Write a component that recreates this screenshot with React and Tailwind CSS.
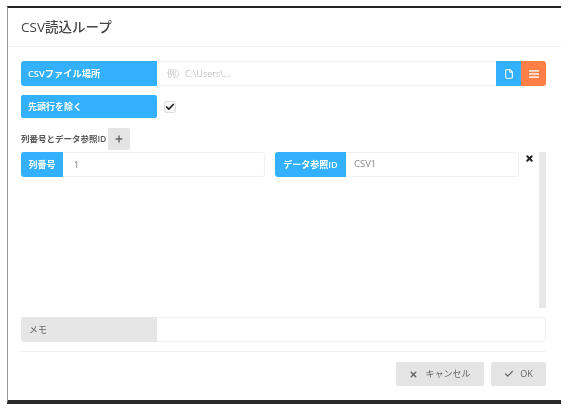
import React from "react";
import { X, Check, File, Plus } from "lucide-react";

function Menu() {
  return (
    <svg width="10" height="8" viewBox="0 0 10 8" fill="#ffe0d2">
      <rect x="0" y="0" width="10" height="1.8" />
      <rect x="0" y="3.1" width="10" height="1.8" />
      <rect x="0" y="6.2" width="10" height="1.8" />
    </svg>
  );
}

export default function App() {
  return (
    <div className="w-[576px] h-[420px] bg-white overflow-hidden pt-[6px] pl-[7px] font-['Open_Sans','Noto_Sans_CJK_JP',sans-serif] blur-[0.7px]">
      <div className="w-[554px] h-[398px] flex flex-col border-l border-l-[#999999] border-t-[2px] border-t-[#222222] border-b-[4px] border-b-[#2a2a2a] bg-white">
        <div className="h-[39px] shrink-0 flex items-center pl-[13px] border-b border-[#f0f0f0] text-[13.5px] font-medium text-[#444444]">
          CSV読込ループ
        </div>
        <div className="flex flex-col pl-[13px] pr-[15px] pt-[14px]">
          <div className="flex h-[25px] rounded-[3px] border border-[#f2f2f2]">
            <div className="w-[136px] -ml-px -my-px bg-[#33b1ff] rounded-l-[3px] flex items-center pl-[7px] text-[9.25px] font-semibold text-white">
              CSVファイル場所
            </div>
            <div className="flex-1 flex items-center pl-[10px] text-[9px] text-[#c4c4c4]">
              例）C:\Users\...
            </div>
            <div className="w-[25px] -my-px bg-[#33b1ff] flex items-center justify-center text-white">
              <File size={10} strokeWidth={2.5} />
            </div>
            <div className="w-[25px] -my-px -mr-px bg-[#ff7f47] rounded-r-[3px] flex items-center justify-center">
              <Menu />
            </div>
          </div>
          <div className="flex items-center h-[23px] mt-[9px]">
            <div className="w-[136px] h-full bg-[#33b1ff] rounded-[2px] flex items-center pl-[7px] text-[9px] font-semibold text-white">
              先頭行を除く
            </div>
            <div className="ml-[7px] w-[12px] h-[12px] rounded-[2px] border border-[#e0e0e0] bg-[#f8f8f8] flex items-center justify-center text-[#222222]">
              <Check size={10} strokeWidth={4} />
            </div>
          </div>
          <div className="flex items-center h-[22px] mt-[10px] text-[8.5px] font-semibold text-[#555555]">
            <span className="w-[87px] whitespace-nowrap">列番号とデータ参照ID</span>
            <div className="w-[22px] h-[22px] rounded-[2px] bg-[#e4e4e4] flex items-center justify-center text-[#666666]">
              <Plus size={10} strokeWidth={3.5} />
            </div>
          </div>
          <div className="flex h-[156px] mt-[2px]">
            <div className="flex items-start flex-1">
              <div className="flex h-[25px] w-[244px] rounded-[3px] border border-[#f0f0f0]">
                <div className="w-[42px] -ml-px -my-px bg-[#33b1ff] rounded-l-[3px] flex items-center justify-center text-[9px] font-semibold text-white">
                  列番号
                </div>
                <div className="flex-1 flex items-center pl-[11px] text-[9px] text-[#777777]">1</div>
              </div>
              <div className="flex h-[25px] w-[244px] ml-[10px] rounded-[3px] border border-[#f0f0f0]">
                <div className="w-[71px] -ml-px -my-px bg-[#33b1ff] rounded-l-[3px] flex items-center justify-center text-[9px] font-semibold text-white whitespace-nowrap">
                  データ参照ID
                </div>
                <div className="flex-1 flex items-center pl-[8px] text-[9.5px] text-[#888888]">CSV1</div>
              </div>
              <div className="ml-[6px] mt-[2px] text-[#222222]">
                <X size={9} strokeWidth={5} />
              </div>
            </div>
            <div className="w-[7px] h-full bg-[#e8e8e8]" />
          </div>
          <div className="flex h-[25px] mt-[9px] rounded-[3px] border border-[#f2f2f2]">
            <div className="w-[136px] -ml-px -my-px bg-[#e6e6e6] rounded-l-[3px] flex items-center pl-[8px] text-[9px] text-[#666666]">
              メモ
            </div>
            <div className="flex-1" />
          </div>
          <div className="h-px bg-[#f0f0f0] mt-[9px]" />
          <div className="flex justify-end gap-[7px] mt-[10px]">
            <div className="w-[88px] h-[24px] rounded-[2px] bg-[#e4e4e4] flex items-center justify-center gap-[7px] text-[9px] text-[#666666]">
              <X size={9} strokeWidth={4} />
              <span>キャンセル</span>
            </div>
            <div className="w-[55px] h-[24px] rounded-[2px] bg-[#e4e4e4] flex items-center justify-center gap-[6px] text-[9px] text-[#666666]">
              <Check size={10} strokeWidth={3} />
              <span>OK</span>
            </div>
          </div>
        </div>
      </div>
    </div>
  );
}
